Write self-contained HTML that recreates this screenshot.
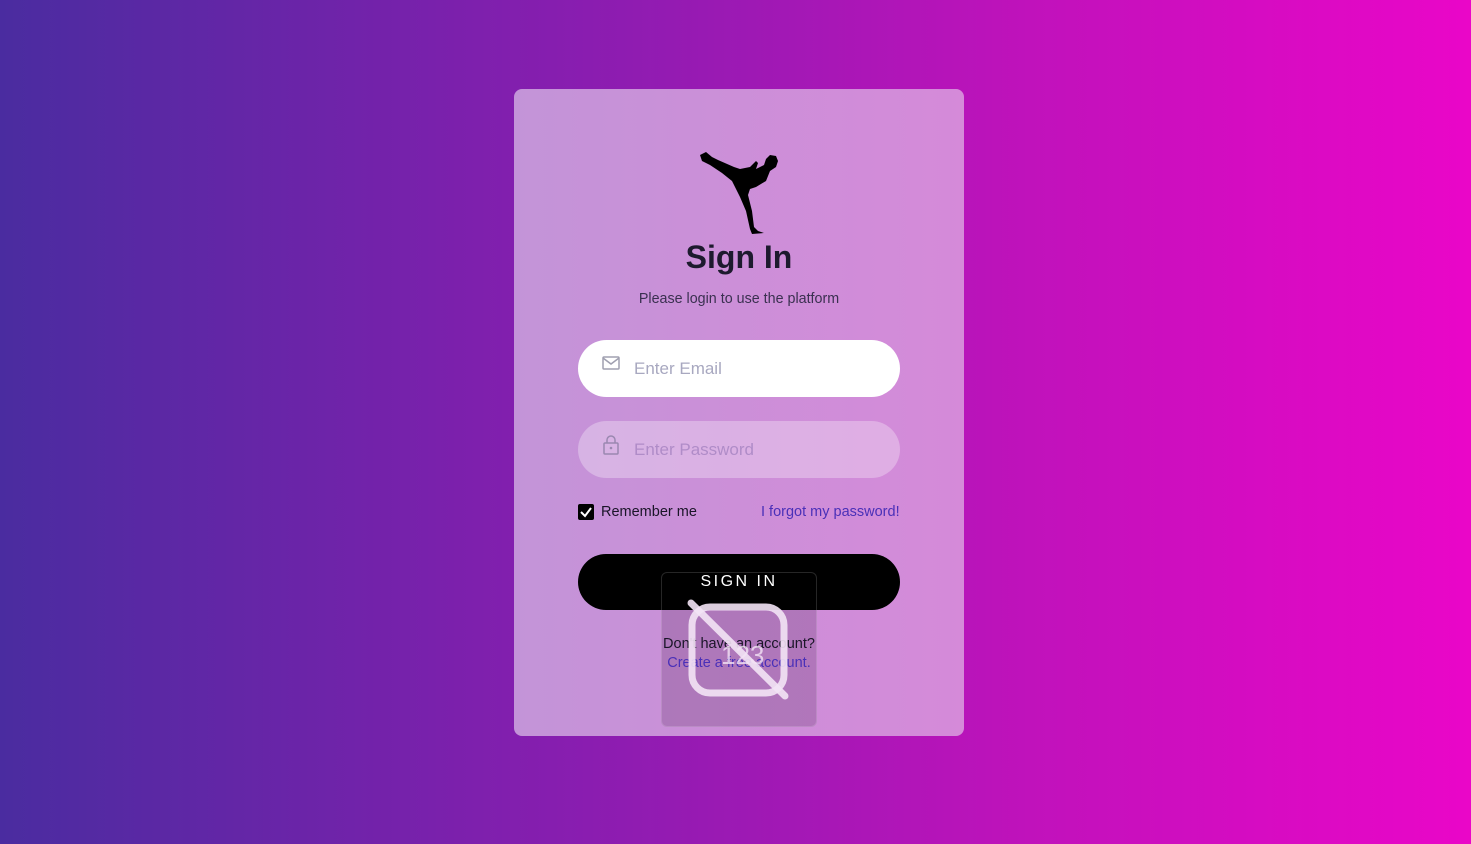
<!DOCTYPE html>
<html><head><style>
*{margin:0;padding:0;box-sizing:border-box}
body{width:1471px;height:844px;overflow:hidden;background:linear-gradient(90deg,#4a2ca0 0%,#8a1db0 40%,#c012bb 70%,#ea06c8 100%);font-family:"Liberation Sans",sans-serif;position:relative}
.card{position:absolute;left:514px;top:89px;width:450px;height:647px;border-radius:8px;background:linear-gradient(90deg,#c394d8,#d58ad9)}
.abs{position:absolute}
h1{position:absolute;left:0;width:450px;text-align:center;font-size:32px;font-weight:bold;color:#1d1a2e}
.sub{top:202px;left:0;width:450px;text-align:center;font-size:14.3px;color:#3a3050}
.inp{position:absolute;left:64px;width:322px;height:57px;border-radius:29px}
.ph{position:absolute;left:56px;top:19px;font-size:17px;color:#a8a8c0}
</style></head><body>
<div class="card">
<svg class="abs" style="left:184px;top:62px" width="82" height="84" viewBox="0 0 82 84">
<path d="M2 4 L8 1 L14 6 L20 9 L36 16 L42 18 L52 16 L58 10 L60 12 L58 18 L66 14 L68 8 L72 4 L78 5 L80 10 L78 16 L72 20 L68 30 L58 36 L52 38 L50 44 L54 60 L56 76 L60 80 L66 82 L54 83 L52 78 L48 60 L42 46 L38 38 L34 30 L24 22 L12 14 L4 10 Z" fill="#000"/>
</svg>
<h1 style="top:150px">Sign In</h1>
<div class="abs sub">Please login to use the platform</div>
<div class="inp" style="top:251px;background:#fff">
<svg class="abs" style="left:24px;top:16px" width="18" height="14" viewBox="0 0 18 14"><rect x="1" y="1" width="16" height="12" rx="1" fill="none" stroke="#a0a0b0" stroke-width="1.5"/><path d="M1 2 L9 8 L17 2" fill="none" stroke="#a0a0b0" stroke-width="1.5"/></svg>
<div class="ph">Enter Email</div></div>
<div class="inp" style="top:332px;background:rgba(255,255,255,0.3)">
<svg class="abs" style="left:24px;top:14px" width="18" height="20" viewBox="0 0 18 20"><rect x="2" y="8" width="14" height="11" rx="1" fill="none" stroke="#9a88b0" stroke-width="1.5"/><path d="M5 8 V5 a4 4 0 0 1 8 0 V8" fill="none" stroke="#9a88b0" stroke-width="1.5"/><circle cx="9" cy="13" r="1.3" fill="#9a88b0"/></svg>
<div class="ph" style="color:#b08cc8">Enter Password</div></div>
<div class="abs" style="left:64px;top:415px;width:16px;height:16px;background:#000;border-radius:2px"><svg width="16" height="16"><path d="M3 8 L7 12 L13 4" stroke="#fff" stroke-width="2" fill="none"/></svg></div>
<div class="abs" style="left:87px;top:415px;font-size:14.5px;color:#1a1528">Remember me</div>
<div class="abs" style="left:247px;top:415px;font-size:14.5px;color:#4a30b8">I forgot my password!</div>
<div class="abs" style="left:147px;top:483px;width:156px;height:155px;border-radius:6px;background:rgba(140,90,150,0.45);border:1px solid rgba(255,255,255,0.15)"></div>
<div class="abs" style="left:64px;top:465px;width:322px;height:56px;border-radius:28px;background:#000"></div>
<div class="abs" style="left:147px;top:483px;width:156px;height:38px;border:1px solid rgba(255,255,255,0.15);border-bottom:none;border-radius:6px 6px 0 0"></div>
<div class="abs" style="left:0;width:450px;top:484px;text-align:center;font-size:16px;letter-spacing:2.5px;color:#fff">SIGN IN</div>
<div class="abs" style="left:0;width:450px;top:547px;text-align:center;font-size:14.5px;color:#1a1528">Don't have an account?</div>
<div class="abs" style="left:0;width:450px;top:566px;text-align:center;font-size:14.5px;color:#4a30b8">Create a free account.</div>
<svg class="abs" style="left:147px;top:483px" width="156" height="155"><rect x="31" y="35" width="92" height="86" rx="18" fill="none" stroke="#f3e3f5" stroke-opacity="0.9" stroke-width="7"/><text x="60" y="92" font-size="26" fill="#f3e3f5" fill-opacity="0.8" font-family="Liberation Sans">123</text><line x1="30" y1="31" x2="124" y2="124" stroke="#f3e3f5" stroke-opacity="0.9" stroke-width="7" stroke-linecap="round"/></svg>
</div>
</body></html>
